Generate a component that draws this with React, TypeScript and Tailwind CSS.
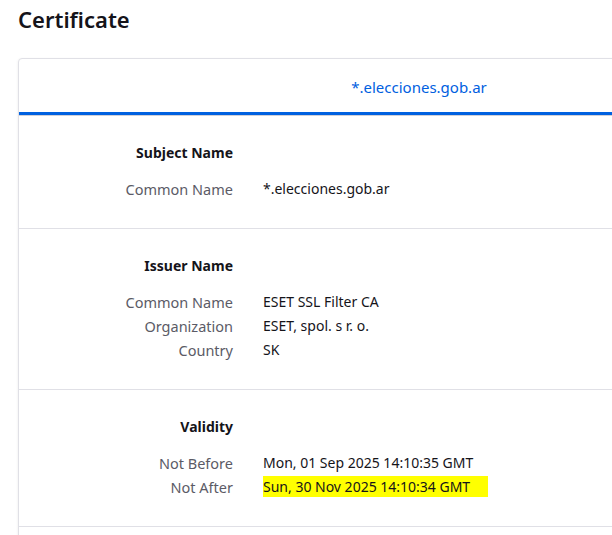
import React from 'react';

type Row = { label: string; value: string; mark?: boolean };
type Section = { title: string; rows: Row[] };

const sections: Section[] = [
  { title: 'Subject Name', rows: [{ label: 'Common Name', value: '*.elecciones.gob.ar' }] },
  {
    title: 'Issuer Name',
    rows: [
      { label: 'Common Name', value: 'ESET SSL Filter CA' },
      { label: 'Organization', value: 'ESET, spol. s r. o.' },
      { label: 'Country', value: 'SK' },
    ],
  },
  {
    title: 'Validity',
    rows: [
      { label: 'Not Before', value: 'Mon, 01 Sep 2025 14:10:35 GMT' },
      { label: 'Not After', value: 'Sun, 30 Nov 2025 14:10:34 GMT', mark: true },
    ],
  },
];

const App: React.FC = () => {
  return (
    <div
      className="w-[612px] h-[535px] overflow-hidden bg-white text-[#15141a] pl-[18px]"
      style={{ fontFamily: '"Noto Sans", "Open Sans", sans-serif' }}
    >
      <h1 className="text-[22px] font-semibold leading-none pt-[8px] h-[58px]">Certificate</h1>

      <div className="w-[802px] rounded-[4px] border border-[#e0e0e6] shadow-[0_1px_3px_rgba(0,0,0,0.08)] bg-white">
        <div className="h-[53px] pt-[4px] flex items-center justify-center text-[#0060df] text-[15px]">
          *.elecciones.gob.ar
        </div>
        <div className="h-[4px] bg-[#0061e0] border-b border-[#d0d0d7]" />

        {sections.map((s) => (
          <div key={s.title} className="border-b border-[#e0e0e6] pt-[25px] pb-[27px]">
            <div className="grid grid-cols-[214px_1fr] gap-x-[30px] text-[14px] leading-[24px]">
              <div className="text-right font-bold">{s.title}</div>
              <div />
              <div className="h-[12px] col-span-2" />
              {s.rows.map((r) => (
                <React.Fragment key={r.label}>
                  <div className="text-right text-[#5b5b66] text-[14.5px]">{r.label}</div>
                  <div>
                    {r.mark ? (
                      <span className="bg-[#ffff00] pr-[18px] py-px">{r.value}</span>
                    ) : (
                      r.value
                    )}
                  </div>
                </React.Fragment>
              ))}
            </div>
          </div>
        ))}
        <div className="h-[60px]" />
      </div>
    </div>
  );
};

export default App;
